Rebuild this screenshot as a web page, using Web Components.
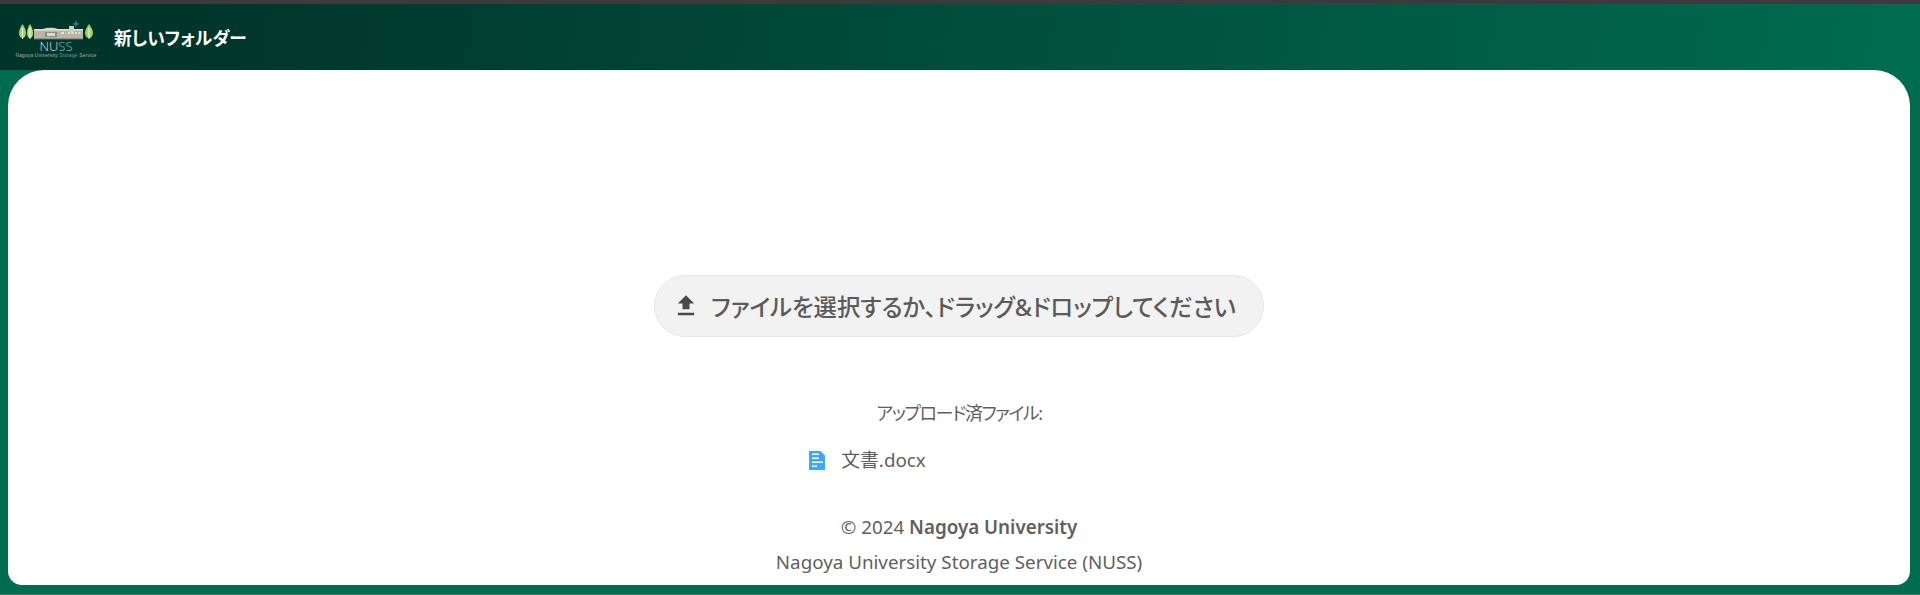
<!DOCTYPE html>
<html lang="ja">
<head>
<meta charset="utf-8">
<title>新しいフォルダー</title>
<style>
  html, body { margin: 0; height: 100%; }
  body {
    height: 595px;
    overflow: hidden;
    display: flex;
    flex-direction: column;
    background: #006c4f;
    font-family: "Noto Sans", "Noto Sans CJK JP", sans-serif;
  }
</style>
</head>
<body>
<nuss-header heading="新しいフォルダー"></nuss-header>
<nuss-card>
  <nuss-upload label="ファイルを選択するか、ドラッグ&ドロップしてください"></nuss-upload>
  <nuss-files heading="アップロード済ファイル:">
    <nuss-file name="文書.docx"></nuss-file>
  </nuss-files>
  <nuss-footer></nuss-footer>
</nuss-card>
<nuss-edge></nuss-edge>

<script>
/* ── logo ── trees + library building + wordmark */
function logoSvg() {
  return `<svg width="84" height="38" viewBox="0 0 84 38" fill="none" xmlns="http://www.w3.org/2000/svg">
    <path d="M7.500 4C9.500 7 11 10 11 13 11 16 9.500 18 7.500 18 5.500 18 4 16 4 13 4 10 5.500 7 7.500 4z" fill="#9fd06a"/>
    <path d="M15 4C16.800 7 18 10 18 13 18 16 16.800 18 15 18 13.200 18 12 16 12 13 12 10 13.200 7 15 4z" fill="#b5dc7c"/>
    <path d="M74 4C76 7 78 10 78 13 78 16 76 18 74 18 72 18 70 16 70 13 70 10 72 7 74 4z" fill="#9fd06a"/>
    <path d="M7.500 8V19M15 8V19M74 8V19" stroke="#f2f2e6" stroke-width="1"/>
    <rect x="19" y="10" width="49" height="9" fill="#b8b5ab"/>
    <rect x="19" y="9" width="49" height="1.500" fill="#e6e4da"/>
    <path d="M27 9.500c3-2.500 14-2.500 17 0z" fill="#d8d6cc"/>
    <rect x="30" y="12" width="12" height="5" fill="#8e8b80"/>
    <rect x="32" y="13" width="8" height="3" fill="#dcdad0"/>
    <rect x="54" y="6" width="5" height="6" fill="#cfcdc3"/>
    <path d="M46 13h3M53 13h2M56.500 13h2M60 13h2M63.500 13h2" stroke="#f4f3ec" stroke-width="1.500"/>
    <path d="M61 1v6M58 4h6" stroke="#4f93a8" stroke-width="1"/>
    <rect x="19" y="18.500" width="49" height="1" fill="#6e6c62"/>
    <text x="41" y="31" text-anchor="middle" font-family="'Noto Sans',sans-serif" font-size="13" font-weight="300" fill="#c9d3cc">NU<tspan fill="#6fb1c4">SS</tspan></text>
    <text x="41" y="36.500" text-anchor="middle" font-family="'Liberation Sans',sans-serif" font-size="4.800" fill="#aab6ad" textLength="81">Nagoya University <tspan fill="#5f9fb4">Storage</tspan> Service</text>
  </svg>`;
}

class NussHeader extends HTMLElement {
  connectedCallback() {
    const root = this.attachShadow({ mode: 'open' });
    root.innerHTML = `
      <style>
        :host {
          display: block;
          flex: none;
          border-top: 4px solid #3b3b3b;
        }
        .bar {
          height: 66px;
          display: flex;
          align-items: center;
          gap: 15px;
          padding-left: 15px;
          box-sizing: border-box;
          background: linear-gradient(100deg, #00352a 0%, #00352a 10%, #006c4f 100%);
        }
        .logo { display: flex; margin-top: 3px; }
        h1 {
          margin: 0;
          font: 700 17.700px "Noto Sans", "Noto Sans CJK JP", sans-serif;
          font-feature-settings: "palt";
          color: #fff;
        }
      </style>
      <div class="bar">
        <span class="logo">${logoSvg()}</span>
        <h1>${this.getAttribute('heading')}</h1>
      </div>`;
  }
}

class NussCard extends HTMLElement {
  constructor() {
    super();
    this.attachShadow({ mode: 'open' }).innerHTML = `
      <style>
        :host {
          display: flex;
          flex-direction: column;
          align-items: center;
          height: 515px;
          flex: none;
          margin: 0 10px 0 8px;
          padding-top: 205px;
          box-sizing: border-box;
          background: #fff;
          border-radius: 36px 36px 14px 14px;
          color: #5f5f5f;
        }
      </style>
      <slot></slot>`;
  }
}

class NussUpload extends HTMLElement {
  connectedCallback() {
    const root = this.attachShadow({ mode: 'open' });
    root.innerHTML = `
      <style>
        :host {
          display: flex;
          align-items: center;
          gap: 11px;
          width: 610px;
          height: 62px;
          box-sizing: border-box;
          padding-left: 17px;
          background: #f2f2f2;
          border: 1px solid #e6e6e6;
          border-radius: 31px;
          font-size: 23.400px;
          font-weight: 500;
          font-feature-settings: "palt";
          color: #5a5a5a;
          white-space: nowrap;
        }
        svg { display: block; flex: none; margin-top: 2px; }
      </style>
      <svg width="28" height="28" viewBox="0 0 24 24" fill="#4a4a4a" xmlns="http://www.w3.org/2000/svg">
        <path d="M9 14h6v-5h4l-7-7-7 7h4zM5 17h14v2H5z"/>
      </svg>
      <span>${this.getAttribute('label')}</span>`;
  }
}

class NussFiles extends HTMLElement {
  connectedCallback() {
    const root = this.attachShadow({ mode: 'open' });
    root.innerHTML = `
      <style>
        :host {
          display: flex;
          flex-direction: column;
          align-items: center;
          margin-top: 64px;
          font-size: 18px;
        }
        .title {
          font-feature-settings: "palt";
          line-height: 24px;
          letter-spacing: -1.400px;
        }
        .list { align-self: flex-start; margin-top: 23px; }
      </style>
      <div class="title">${this.getAttribute('heading')}</div>
      <div class="list"><slot></slot></div>`;
  }
}

class NussFile extends HTMLElement {
  connectedCallback() {
    const root = this.attachShadow({ mode: 'open' });
    root.innerHTML = `
      <style>
        :host {
          display: flex;
          align-items: center;
          gap: 16px;
          font-size: 18.800px;
          line-height: 24px;
          margin-left: -67px;
        }
        svg { display: block; flex: none; }
      </style>
      <svg width="16" height="19" viewBox="0 0 16 19" fill="#42a5f5" xmlns="http://www.w3.org/2000/svg">
        <path fill-rule="evenodd" d="M0 0H11.500L16 4.500V19H0zM3 2.500V4H10V2.500zM3 6.500V8H10V6.500zM3 10.500V12H14V10.500zM3 14.500V16H8V14.500z"/>
      </svg>
      <span>${this.getAttribute('name')}</span>`;
  }
}

class NussFooter extends HTMLElement {
  constructor() {
    super();
    this.attachShadow({ mode: 'open' }).innerHTML = `
      <style>
        :host {
          display: block;
          margin-top: 38px;
          text-align: center;
          font-size: 18.800px;
          line-height: 35px;
        }
        b { font-weight: 600; }
      </style>
      <div>© 2024 <b>Nagoya University</b></div>
      <div>Nagoya University Storage Service (NUSS)</div>`;
  }
}

class NussEdge extends HTMLElement {
  constructor() {
    super();
    this.attachShadow({ mode: 'open' }).innerHTML = `
      <style>
        :host {
          display: block;
          margin-top: auto;
          height: 1px;
          background: #5d6b65;
        }
      </style>`;
  }
}

customElements.define('nuss-header', NussHeader);
customElements.define('nuss-card', NussCard);
customElements.define('nuss-upload', NussUpload);
customElements.define('nuss-files', NussFiles);
customElements.define('nuss-file', NussFile);
customElements.define('nuss-footer', NussFooter);
customElements.define('nuss-edge', NussEdge);
</script>
</body>
</html>
